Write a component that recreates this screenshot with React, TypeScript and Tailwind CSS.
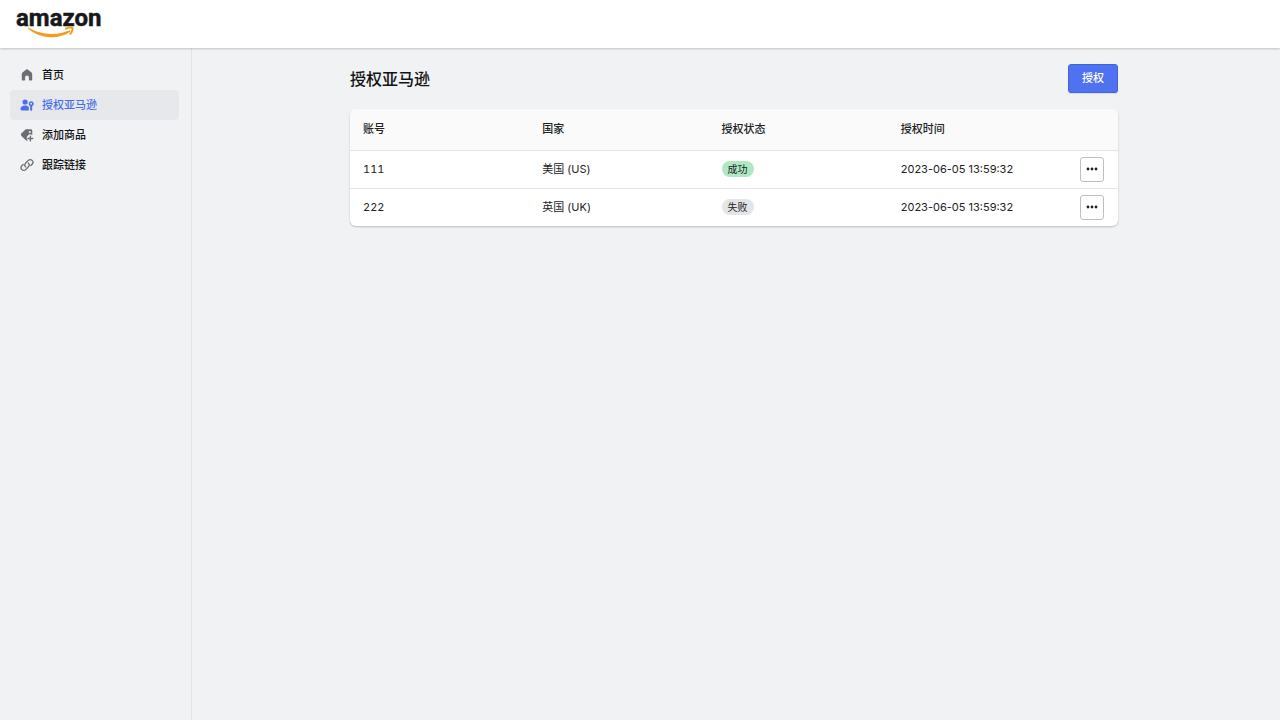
import React from "react";
import clsx from "clsx";

const navItems = [
  { label: "首页", icon: HomeIcon, active: false },
  { label: "授权亚马逊", icon: UserKeyIcon, active: true },
  { label: "添加商品", icon: TagPlusIcon, active: false },
  { label: "跟踪链接", icon: LinkIcon, active: false },
];

const accounts = [
  { id: "111", country: "美国 (US)", status: "成功", ok: true, time: "2023-06-05 13:59:32" },
  { id: "222", country: "英国 (UK)", status: "失败", ok: false, time: "2023-06-05 13:59:32" },
];

function HomeIcon() {
  return (
    <svg viewBox="0 0 14 14" className="size-3.5" fill="currentColor" aria-hidden="true">
      <path d="M6.2 1.5a1.3 1.3 0 0 1 1.6 0l3.7 3.1c.5.4.7.9.7 1.5v5.4c0 .6-.4 1-1 1H9.6c-.4 0-.7-.3-.7-.7V9.3a1.9 1.9 0 0 0-3.8 0v2.5c0 .4-.3.7-.7.7H2.8c-.6 0-1-.4-1-1V6.1c0-.6.2-1.1.7-1.5z" />
    </svg>
  );
}

function UserKeyIcon() {
  return (
    <svg viewBox="0 0 14 14" className="size-3.5" fill="currentColor" aria-hidden="true">
      <circle cx="5.1" cy="4" r="2.6" />
      <path d="M.5 10.6C.5 8.8 2.4 7.4 5 7.4c1.7 0 3 .6 3.8 1.5v3.2c0 .3-.2.5-.5.5H2.2c-1 0-1.7-.8-1.7-1.600z" />
      <path
        fillRule="evenodd"
        d="M11.200 3.200a2.500 2.500 0 0 1 1 4.800v3.700c0 .6-.4 1-1 1s-1-.4-1-1V8a2.500 2.500 0 0 1 1-4.800zm0 1.600a.9.9 0 1 0 0 1.800.9.9 0 0 0 0-1.800z"
      />
    </svg>
  );
}

function TagPlusIcon() {
  return (
    <svg viewBox="0 0 14 14" className="size-3.5" fill="currentColor" aria-hidden="true">
      <path
        fillRule="evenodd"
        d="M6.3 1.300h4.500c.9 0 1.500.6 1.500 1.500v4.300a3.500 3.500 0 0 0-4.500 5.300 1.500 1.500 0 0 1-1.900-.2L1.300 7.700a1.500 1.500 0 0 1 0-2.100L5.200 1.700c.3-.3.7-.4 1.100-.4zm3.500 1.600a1 1 0 1 0 0 2 1 1 0 0 0 0-2z"
      />
      <path d="M10.4 8.100v4.800M8 10.500h4.800" stroke="currentColor" strokeWidth="1.3" strokeLinecap="round" />
    </svg>
  );
}

function LinkIcon() {
  return (
    <svg
      viewBox="0 0 14 14"
      className="size-3.5"
      fill="none"
      stroke="currentColor"
      strokeWidth="1.3"
      strokeLinecap="round"
      aria-hidden="true"
    >
      <path d="M5.7 8.900a2.600 2.600 0 0 1-.2-3.600l2.800-2.900a2.600 2.600 0 0 1 3.800 0 2.700 2.700 0 0 1 0 3.800l-1.300 1.300" />
      <path d="M8.300 5.100a2.600 2.600 0 0 1 .2 3.600l-2.800 2.900a2.600 2.600 0 0 1-3.800 0 2.700 2.700 0 0 1 0-3.800l1.300-1.300" />
    </svg>
  );
}

function Logo() {
  return (
    <a href="#" aria-label="amazon" className="block">
      <svg viewBox="0 0 88 34" className="h-[34px] w-[88px] overflow-visible">
        <text
          x="0"
          y="19"
          fontSize="24"
          fontWeight="700"
          fill="#17181b"
          stroke="#17181b"
          strokeWidth="0.5"
          style={{ fontFamily: "Roboto, sans-serif" }}
        >
          amazon
        </text>
        <path
          d="M12.300 20.600C19.500 25 27.500 26.900 36 26.900c6.500 0 12.500-1.400 17.300-3.400.9-.4 1.600.6.8 1.200C49.500 28.300 42 30.200 35.300 30.200c-9.500 0-17.300-3.700-23.600-9-.5-.4 0-1 .6-.6z"
          fill="#f59b1d"
        />
        <path
          d="M50 21.600c2-1.300 5.700-1.500 6.400-.8.6.9-.2 4.200-2.100 6"
          fill="none"
          stroke="#f59b1d"
          strokeWidth="2"
          strokeLinecap="round"
          strokeLinejoin="round"
        />
      </svg>
    </a>
  );
}

function AccountTable() {
  return (
    <div className="overflow-hidden rounded-md bg-white shadow-[0_1px_2px_rgba(0,0,0,0.22)]">
      <table className="w-full table-fixed text-left text-[11px] leading-4 text-[#202223]">
        <thead className="bg-[#fafafa]">
          <tr className="h-[41px] border-b border-[#e1e3e5]">
            <th className="pl-[13px] font-medium">账号</th>
            <th className="pl-[13px] font-medium">国家</th>
            <th className="pl-[13px] font-medium">授权状态</th>
            <th className="pl-[13px] font-medium">授权时间</th>
            <th className="w-[51px]" aria-label="操作" />
          </tr>
        </thead>
        <tbody>
          {accounts.map((item) => (
            <tr key={item.id} className="border-b border-[#e1e3e5] last:border-b-0">
              <td className="pl-[13px] tabular-nums">{item.id}</td>
              <td className="pl-[13px]">{item.country}</td>
              <td className="pl-[13px]">
                <span
                  className={clsx(
                    "inline-block rounded-full px-1.5 text-[10px] leading-4",
                    item.ok ? "bg-[#aee9c4]" : "bg-[#e4e5e7]"
                  )}
                >
                  {item.status}
                </span>
              </td>
              <td className="pl-[13px]">{item.time}</td>
              <td className="py-1.5 pl-[13px]">
                <button
                  type="button"
                  aria-label="更多"
                  className="flex h-[25px] w-6 items-center justify-center rounded-[3px] border border-[#babfc3] bg-white"
                >
                  <svg viewBox="0 0 12 4" className="h-1 w-3" fill="currentColor">
                    <circle cx="2" cy="2" r="1.4" />
                    <circle cx="6" cy="2" r="1.4" />
                    <circle cx="10" cy="2" r="1.4" />
                  </svg>
                </button>
              </td>
            </tr>
          ))}
        </tbody>
      </table>
    </div>
  );
}

export default function App() {
  return (
    <div className="flex min-h-screen flex-col bg-[#f0f2f4] font-[Inter,'Noto_Sans_CJK_SC',sans-serif] text-[#111213]">
      <header className="relative flex h-12 items-center bg-white px-4 shadow-[0_1px_2px_rgba(0,0,0,0.2)]">
        <Logo />
      </header>

      <div className="flex flex-1">
        <nav className="w-48 shrink-0 border-r border-[#e1e3e5] pt-3 pr-3 pl-2.5">
          {navItems.map((item) => (
            <a
              key={item.label}
              href="#"
              aria-current={item.active ? "page" : undefined}
              className={clsx(
                "flex items-center gap-2 rounded px-2.5 py-[7px] text-[11px] leading-4 font-medium",
                item.active && "bg-[#e6e8ec] text-[#4a6fea]"
              )}
            >
              <span className={item.active ? "text-[#4a6fea]" : "text-[#6b6f73]"}>
                <item.icon />
              </span>
              {item.label}
            </a>
          ))}
        </nav>

        <main className="flex-1 pt-4 pr-1">
          <div className="mx-auto max-w-3xl">
            <div className="mb-4 flex items-center justify-between">
              <h1 className="text-base leading-6 font-medium">授权亚马逊</h1>
              <button
                type="button"
                className="rounded-[3px] border border-[#4363dc] bg-[#4e72f0] px-[13px] py-1.5 text-[11px] leading-[15px] font-medium text-white shadow-[0_1px_1px_rgba(0,0,0,0.1)]"
              >
                授权
              </button>
            </div>
            <AccountTable />
          </div>
        </main>
      </div>
    </div>
  );
}
